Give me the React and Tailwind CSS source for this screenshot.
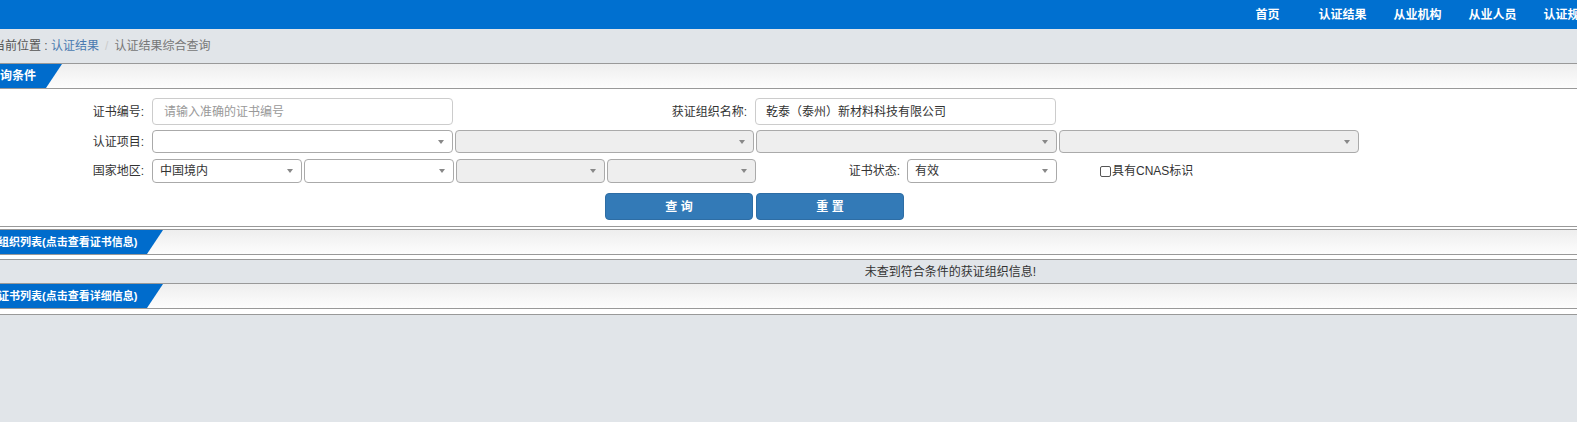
const navItems = ["首页", "认证结果", "从业机构", "从业人员", "认证规则"];

function Arrow() {
  return (
    <span className="absolute right-[8px] top-1/2 -translate-y-1/2 w-0 h-0 border-x-[3.5px] border-x-transparent border-t-[4px] border-t-[#888]" />
  );
}

function Select({ w, h, value, disabled }) {
  return (
    <div
      className={`relative ${w} ${h} rounded-[4px] border border-[#aaa] flex items-center pl-[7px] text-[12px] text-[#333] ${
        disabled ? "bg-[#eee]" : "bg-white"
      }`}
    >
      {value}
      <Arrow />
    </div>
  );
}

function Tab({ title, tabW, offset, size }) {
  return (
    <>
      <div className={`${tabW} h-full bg-[#006ccc] text-white ${size} font-bold flex items-center overflow-hidden`}>
        <span className={`${offset} whitespace-nowrap`}>{title}</span>
      </div>
      <svg width="16" height="24" viewBox="0 0 16 24" className="block">
        <polygon points="0,0 16,0 0,24" fill="#006ccc" />
      </svg>
    </>
  );
}

export default function App() {
  return (
    <div className="w-[1577px] min-h-[422px] overflow-hidden bg-[#e1e5e9] font-['Liberation_Sans','Noto_Sans_CJK_SC',sans-serif] text-[#333]">
      {/* top nav */}
      <div className="h-[29px] bg-[#0070d0] flex justify-end -mr-[28px]">
        {navItems.map((n) => (
          <div key={n} className="w-[75px] flex items-center justify-center text-white text-[12px] font-bold">
            {n}
          </div>
        ))}
      </div>

      {/* breadcrumb */}
      <div className="h-[34px] flex items-center text-[12px] whitespace-nowrap">
        <span className="-ml-[7px] text-[#555]">当前位置 :&nbsp;</span>
        <span className="text-[#4a7ab0]">认证结果</span>
        <span className="px-[6px] text-[#ccc]">/</span>
        <span className="text-[#777]">认证结果综合查询</span>
      </div>

      {/* search section */}
      <div className="h-[26px] border-y border-[#999] bg-gradient-to-b from-[#eeeeee] to-[#fdfdfd] flex">
        <Tab title="查询条件" tabW="w-[46px]" offset="-ml-[12px]" size="text-[12px]" />
      </div>
      <div className="bg-white pt-[9px] pb-[6px] border-b border-[#999] text-[12px]">
        <div className="flex items-center h-[27px]">
          <div className="w-[144px] text-right">证书编号:</div>
          <div className="ml-[8px] w-[301px] h-full rounded-[4px] border border-[#ccc] flex items-center pl-[11px] text-[#999]">
            请输入准确的证书编号
          </div>
          <div className="w-[302px] text-right pr-[8px]">获证组织名称:</div>
          <div className="w-[301px] h-full rounded-[4px] border border-[#ccc] flex items-center pl-[10px] text-[#333]">
            乾泰（泰州）新材料科技有限公司
          </div>
        </div>

        <div className="flex items-center mt-[5px]">
          <div className="w-[144px] text-right">认证项目:</div>
          <div className="ml-[8px] flex gap-[2px]">
            <Select w="w-[301px]" h="h-[23px]" />
            <Select w="w-[299px]" h="h-[23px]" disabled />
            <Select w="w-[301px]" h="h-[23px]" disabled />
            <Select w="w-[300px]" h="h-[23px]" disabled />
          </div>
        </div>

        <div className="flex items-center mt-[6px]">
          <div className="w-[144px] text-right">国家地区:</div>
          <div className="ml-[8px] flex gap-[2px]">
            <Select w="w-[150px]" h="h-[24px]" value="中国境内" />
            <Select w="w-[150px]" h="h-[24px]" />
            <Select w="w-[149px]" h="h-[24px]" disabled />
            <Select w="w-[149px]" h="h-[24px]" disabled />
          </div>
          <div className="w-[151px] text-right pr-[7px]">证书状态:</div>
          <Select w="w-[150px]" h="h-[24px]" value="有效" />
          <div className="ml-[43px] flex items-center">
            <span className="w-[11px] h-[11px] border border-[#555] rounded-[2px] bg-white mr-[1px]" />
            具有CNAS标识
          </div>
        </div>

        <div className="flex justify-center gap-[3px] mt-[10px] pl-[152px] pr-[220px]">
          <button className="w-[148px] h-[27px] rounded-[4px] bg-[#337ab7] border border-[#2e6da4] text-white text-[12px] font-bold">
            查 询
          </button>
          <button className="w-[148px] h-[27px] rounded-[4px] bg-[#337ab7] border border-[#2e6da4] text-white text-[12px] font-bold">
            重 置
          </button>
        </div>
      </div>

      <div className="h-[2px] bg-white" />

      {/* org list */}
      <div className="h-[26px] border-y border-[#999] bg-gradient-to-b from-[#eeeeee] to-[#fdfdfd] flex">
        <Tab title="获证组织列表(点击查看证书信息)" tabW="w-[147px]" offset="-ml-[24px]" size="text-[11px]" />
      </div>
      <div className="h-[4px] bg-white border-b border-[#999] box-content" />
      <div className="h-[24px] border-b border-[#999] flex items-center justify-center pl-[324px] text-[12px] text-[#333]">
        未查到符合条件的获证组织信息!
      </div>

      {/* cert list */}
      <div className="h-[24px] bg-gradient-to-b from-[#eeeeee] to-[#fdfdfd] border-b border-[#999] flex box-content">
        <Tab title="证书列表(点击查看详细信息)" tabW="w-[147px]" offset="-ml-[2px]" size="text-[11px]" />
      </div>
      <div className="h-[5px] bg-white border-b border-[#999] box-content" />
    </div>
  );
}
